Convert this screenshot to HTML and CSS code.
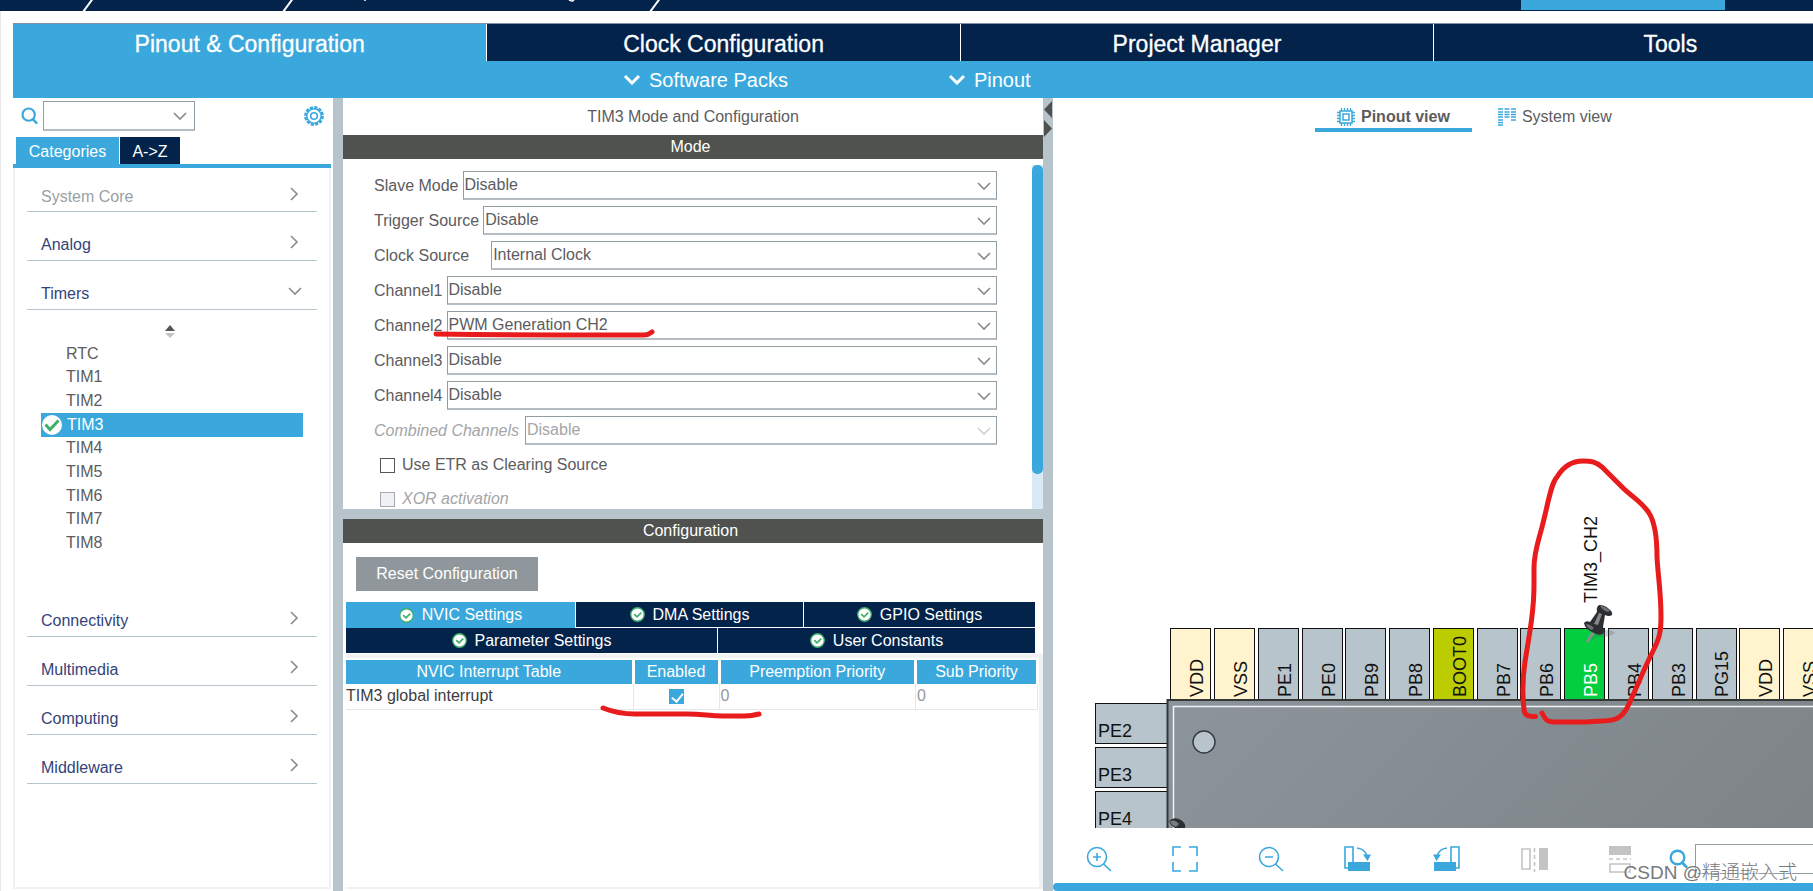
FILE: index.html
```html
<!DOCTYPE html>
<html lang="en">
<head>
<meta charset="utf-8">
<title>Pinout &amp; Configuration</title>
<link rel="stylesheet" href="styles.css">
</head>
<body>
<svg class="defs" aria-hidden="true">
  <symbol id="chev-down" viewBox="0 0 14 9"><path d="M1 1l6 6 6-6" fill="none" stroke="currentColor" stroke-width="1.6"/></symbol>
  <symbol id="chev-bold" viewBox="0 0 18 11"><path d="M2 2l7 7 7-7" fill="none" stroke="currentColor" stroke-width="3"/></symbol>
  <symbol id="chev-right" viewBox="0 0 9 14"><path d="M1 1l6 6-6 6" fill="none" stroke="currentColor" stroke-width="1.6"/></symbol>
  <symbol id="search" viewBox="0 0 20 20"><circle cx="8.500" cy="8.500" r="6.800" fill="none" stroke="currentColor" stroke-width="2.400"/><path d="M13 13.500l5 5" stroke="currentColor" stroke-width="2.600"/></symbol>
  <symbol id="ok" viewBox="0 0 16 16"><circle cx="8" cy="8" r="7.200" fill="#fff" stroke="#3fae6d" stroke-width="1.400"/><path d="M4.500 7.500l3 3 4.500-4.500" fill="none" stroke="#3fae6d" stroke-width="1.800"/></symbol>
  <symbol id="tack" viewBox="0 0 34 42">
    <path d="M8 36q6-12 16-10 6 0 8 3-6 4-12 4-6-1-12 4z" fill="#556" opacity=".25"/>
    <path d="M3 37l7-11 3 1-8 12z" fill="#8b8f93"/>
    <path d="M1 19q2-3 6-1l7-10q-1-5 2-7 6 0 10 4 4 3 3 6-3 2-7 0l-2 12q2 4 0 7-5 2-11-2-7-3-8-9z" fill="#2c2e31"/>
    <path d="M16 9l-5 11 4 1 4-11z" fill="#85898c"/><path d="M17 2q6 0 10 5l-2 1q-5-1-8-6zM3 20q4 0 8 4l-2 2q-5-2-6-6z" fill="#6c7073"/>
  </symbol>
</svg>

<header class="topbar">
  <svg class="crumbs" width="700" height="11" aria-hidden="true"><path d="M83 12l11-15M283 12l11-15M650 12l11-15" stroke="#fff" stroke-width="2"/><path d="M365 0v1M569 0q3 2 5 0" fill="none" stroke="#fff" stroke-width="1.500"/></svg>
  <span class="accent"></span>
</header>

<main class="app">
  <nav class="tabs">
    <button class="tab active">Pinout &amp; Configuration</button>
    <button class="tab">Clock Configuration</button>
    <button class="tab">Project Manager</button>
    <button class="tab">Tools</button>
  </nav>
  <div class="subbar">
    <button class="menu"><svg width="18" height="11"><use href="#chev-bold"/></svg>Software Packs</button>
    <button class="menu"><svg width="18" height="11"><use href="#chev-bold"/></svg>Pinout</button>
  </div>

  <div class="work">
    <aside class="side">
      <div class="finder">
        <svg class="blue" width="18" height="20"><use href="#search"/></svg>
        <div class="drop small"><select aria-label="Search peripherals"><option></option></select><svg width="14" height="9"><use href="#chev-down"/></svg></div>
        <button class="gear" aria-label="Settings"><svg width="22" height="22" viewBox="0 0 22 22" fill="none" stroke="#3aa8dc"><circle cx="11" cy="11" r="8.600" stroke-width="2.600" stroke-dasharray="3.200 1.300"/><circle cx="11" cy="11" r="7.200" stroke-width="1.500"/><circle cx="11" cy="11" r="3.300" stroke-width="1.600"/></svg></button>
      </div>
      <div class="sidetabs"><button class="on">Categories</button><button>A-&gt;Z</button></div>
      <div class="tree">
        <button class="cat muted">System Core<svg width="9" height="14"><use href="#chev-right"/></svg></button>
        <button class="cat">Analog<svg width="9" height="14"><use href="#chev-right"/></svg></button>
        <button class="cat">Timers<svg width="14" height="9"><use href="#chev-down"/></svg></button>
        <div class="branch">
          <svg class="sorter" width="10" height="13"><path d="M5 0l5 6H0z" fill="#555"/><path d="M0 8h10l-5 5z" fill="#c4c4c4"/></svg>
          <ul>
            <li>RTC</li><li>TIM1</li><li>TIM2</li>
            <li class="sel"><svg width="20" height="20" viewBox="0 0 20 20"><circle cx="10" cy="10" r="10" fill="#fff"/><path d="M3.500 9.500l4.500 5 8.500-9" fill="none" stroke="#3fae6d" stroke-width="3"/></svg>TIM3</li>
            <li>TIM4</li><li>TIM5</li><li>TIM6</li><li>TIM7</li><li>TIM8</li>
          </ul>
        </div>
        <button class="cat">Connectivity<svg width="9" height="14"><use href="#chev-right"/></svg></button>
        <button class="cat">Multimedia<svg width="9" height="14"><use href="#chev-right"/></svg></button>
        <button class="cat">Computing<svg width="9" height="14"><use href="#chev-right"/></svg></button>
        <button class="cat">Middleware<svg width="9" height="14"><use href="#chev-right"/></svg></button>
      </div>
    </aside>
    <div class="split"></div>

    <section class="center">
      <h1>TIM3 Mode and Configuration</h1>
      <h2>Mode</h2>
      <div class="modepane">
        <div class="form">
          <div class="row"><label for="f1">Slave Mode</label><div class="drop"><select id="f1"><option>Disable</option></select><svg width="14" height="9"><use href="#chev-down"/></svg></div></div>
          <div class="row"><label for="f2">Trigger Source</label><div class="drop"><select id="f2"><option>Disable</option></select><svg width="14" height="9"><use href="#chev-down"/></svg></div></div>
          <div class="row wide"><label for="f3">Clock Source</label><div class="drop"><select id="f3"><option>Internal Clock</option></select><svg width="14" height="9"><use href="#chev-down"/></svg></div></div>
          <div class="row"><label for="f4">Channel1</label><div class="drop"><select id="f4"><option>Disable</option></select><svg width="14" height="9"><use href="#chev-down"/></svg></div></div>
          <div class="row"><label for="f5">Channel2</label><div class="drop"><select id="f5"><option>PWM Generation CH2</option></select><svg width="14" height="9"><use href="#chev-down"/></svg></div>
            <svg class="mark channel-mark" width="224" height="12"><path d="M4 8q60 1 120 1h88q4 0 8-3" fill="none" stroke="#e81c1c" stroke-width="5" stroke-linecap="round"/></svg></div>
          <div class="row"><label for="f6">Channel3</label><div class="drop"><select id="f6"><option>Disable</option></select><svg width="14" height="9"><use href="#chev-down"/></svg></div></div>
          <div class="row"><label for="f7">Channel4</label><div class="drop"><select id="f7"><option>Disable</option></select><svg width="14" height="9"><use href="#chev-down"/></svg></div></div>
          <div class="row off"><label for="f8">Combined Channels</label><div class="drop"><select id="f8" disabled><option>Disable</option></select><svg width="14" height="9"><use href="#chev-down"/></svg></div></div>
          <div class="check"><input type="checkbox" id="c1"><label for="c1">Use ETR as Clearing Source</label></div>
          <div class="check off"><input type="checkbox" id="c2" disabled><label for="c2">XOR activation</label></div>
        </div>
        <div class="track"><div class="thumb"></div></div>
      </div>
      <div class="hsplit"></div>
      <h2>Configuration</h2>
      <div class="config">
        <button class="reset">Reset Configuration</button>
        <div class="ctabs three">
          <button class="on"><svg width="15" height="15"><use href="#ok"/></svg>NVIC Settings</button>
          <button><svg width="15" height="15"><use href="#ok"/></svg>DMA Settings</button>
          <button><svg width="15" height="15"><use href="#ok"/></svg>GPIO Settings</button>
        </div>
        <div class="ctabs two">
          <button><svg width="15" height="15"><use href="#ok"/></svg>Parameter Settings</button>
          <button><svg width="15" height="15"><use href="#ok"/></svg>User Constants</button>
        </div>
        <div class="tablepane">
          <table>
            <colgroup><col class="k1"><col class="k2"><col class="k3"><col class="k4"></colgroup>
            <thead><tr><th>NVIC Interrupt Table</th><th>Enabled</th><th>Preemption Priority</th><th>Sub Priority</th></tr></thead>
            <tbody><tr><td>TIM3 global interrupt</td><td class="mid"><input type="checkbox" class="tick" checked aria-label="TIM3 global interrupt enabled"></td><td class="num">0</td><td class="num">0</td></tr></tbody>
          </table>
          <svg class="mark table-mark" width="168" height="16"><path d="M4 4c10 4 18 6 32 6h52c16 0 22 2 36 2h22c6 0 10-1 14-2" fill="none" stroke="#e81c1c" stroke-width="5" stroke-linecap="round" stroke-linejoin="round"/></svg>
        </div>
      </div>
    </section>
    <div class="split arrows"><svg width="10" height="40"><path d="M9 3v17L1 11.500zM1 22v17l8-8.500z" fill="#505250"/></svg></div>

    <section class="right">
      <div class="views">
        <button class="view on"><svg width="18" height="18" viewBox="0 0 18 18" fill="none" stroke="#3aa8dc"><path d="M3 3h12v12H3zM6 6h6v6H6z" stroke-width="1.500"/><path d="M4.500 0v3m3-3v3m3-3v3m3-3v3M4.500 15v3m3-3v3m3-3v3m3-3v3M0 4.500h3m-3 3h3m-3 3h3m-3 3h3M15 4.500h3m-3 3h3m-3 3h3m-3 3h3" stroke-width="1.300"/></svg>Pinout view</button>
        <button class="view"><svg width="18" height="18" viewBox="0 0 18 18" stroke="#3aa8dc" stroke-width="1.500"><path d="M0 1h5m1.500 0h5M13 1h5M0 4h5m1.500 0h5M13 4h5M0 6.500h5m1.500 0h5m1.500 0h5M0 9h5m1.500 0h5m1.500 0h5M0 12h5m8 0h5M0 14.500h5M0 17h5"/></svg>System view</button>
      </div>
      <div class="canvas">
        <svg class="chip" width="100%" height="100%">
          <defs><linearGradient id="body" gradientUnits="userSpaceOnUse" x1="1250" y1="640" x2="1640" y2="1030"><stop offset="0" stop-color="#8c949b"/><stop offset="1" stop-color="#7d8386"/></linearGradient></defs>
          <g transform="translate(-1053 -140)">
            <g class="pins">
              <rect class="pw" x="1170.500" y="627.500" width="40" height="72"/><rect class="pw" x="1214.500" y="627.500" width="40" height="72"/>
              <rect x="1258.500" y="627.500" width="40" height="72"/><rect x="1302.500" y="627.500" width="40" height="72"/><rect x="1345.500" y="627.500" width="40" height="72"/><rect x="1389.500" y="627.500" width="40" height="72"/>
              <rect class="boot" x="1433.500" y="627.500" width="40" height="72"/>
              <rect x="1477.500" y="627.500" width="40" height="72"/><rect x="1520.500" y="627.500" width="40" height="72"/>
              <rect class="used" x="1564.500" y="627.500" width="40" height="72"/>
              <rect x="1608.500" y="627.500" width="40" height="72"/><rect x="1652.500" y="627.500" width="40" height="72"/><rect x="1696.500" y="627.500" width="40" height="72"/>
              <rect class="pw" x="1739.500" y="627.500" width="40" height="72"/><rect class="pw" x="1783.500" y="627.500" width="40" height="72"/>
              <rect x="1095.500" y="702.500" width="72" height="40"/><rect x="1095.500" y="746.500" width="72" height="40"/><rect x="1095.500" y="790.500" width="72" height="40"/>
            </g>
            <rect x="1167.500" y="699" width="900" height="900" fill="url(#body)" stroke="#333837" stroke-width="2"/>
            <path d="M1173.500 900V705.500H2100" fill="none" stroke="#f1f3f4" stroke-width="1.500"/>
            <circle cx="1204" cy="741" r="11" fill="#b8c4cb" stroke="#333a3c" stroke-width="1.400"/>
            <g class="names">
              <text transform="translate(1203 696) rotate(-90)">VDD</text><text transform="translate(1247 696) rotate(-90)">VSS</text><text transform="translate(1291 696) rotate(-90)">PE1</text><text transform="translate(1335 696) rotate(-90)">PE0</text><text transform="translate(1378 696) rotate(-90)">PB9</text><text transform="translate(1422 696) rotate(-90)">PB8</text><text transform="translate(1466 696) rotate(-90)">BOOT0</text><text transform="translate(1510 696) rotate(-90)">PB7</text><text transform="translate(1553 696) rotate(-90)">PB6</text><text class="lit" transform="translate(1597 696) rotate(-90)">PB5</text><text transform="translate(1641 696) rotate(-90)">PB4</text><text transform="translate(1685 696) rotate(-90)">PB3</text><text transform="translate(1728 696) rotate(-90)">PG15</text><text transform="translate(1772 696) rotate(-90)">VDD</text><text transform="translate(1816 696) rotate(-90)">VSS</text>
              <text transform="translate(1597 602) rotate(-90)">TIM3_CH2</text>
              <text x="1098" y="736">PE2</text><text x="1098" y="780">PE3</text><text x="1098" y="824">PE4</text>
            </g>
            <use href="#tack" x="1583" y="603" width="34" height="42"/>
            <path d="M1169 820q5-5 12-1 5 3 4 8h-10q-4-2-6-7z" fill="#2c2e31"/><path d="M1170 820q5-2 9 3l-3 3q-5-2-6-6z" fill="#777c80"/>
            <path class="loop" d="M1535.500 715.500c-9 0-11-2-11.500-7-2-17-1-34 1-48 5-30 9-52 9-77V567c0-17 5-28 9-45 5-19 8-40 14-46 6-10 14-16 26-16 9 0 13 1 19 6l20 20c10 10 20 15 27 26 7 11 8 27 8 44 1 20 4 34 4 60 0 16-2 22-8 34-10 20-17 38-24 53-9 20-18 16-42 18h-32c-7 0-9-1-13-9"/>
          </g>
        </svg>
      </div>
      <div class="tools">
        <button aria-label="Zoom in"><svg width="26" height="26" viewBox="0 0 26 26"><circle cx="11" cy="11" r="9.500"/><path d="M17.500 18l7.500 7M7 11h8M11 7v8"/></svg></button>
        <button aria-label="Fit"><svg width="26" height="26" viewBox="0 0 26 26"><path d="M1 10V1h8M17 1h8v9M25 16v9h-8M9 25H1v-9"/></svg></button>
        <button aria-label="Zoom out"><svg width="26" height="26" viewBox="0 0 26 26"><circle cx="11" cy="11" r="9.500"/><path d="M17.500 18l7.500 7M7 11h8"/></svg></button>
        <button aria-label="Rotate right"><svg width="28" height="26" viewBox="0 0 28 26"><path d="M4 22H1V1h8v15M13 2q8 1 10 8"/><path d="M4 16h22v9H4zM19 8.500h8L23.500 15z" fill="#3aa8dc" stroke="none"/></svg></button>
        <button aria-label="Rotate left"><svg width="28" height="26" viewBox="0 0 28 26"><path d="M24 22h3V1h-8v15M15 2Q7 3 5 10"/><path d="M2 16h22v9H2zM1 8.500h8L4.500 15z" fill="#3aa8dc" stroke="none"/></svg></button>
        <button aria-label="Mirror" disabled><svg class="dim" width="28" height="26" viewBox="0 0 28 26"><path d="M2 3h8v20H2z"/><path d="M14.500 2v24" stroke-dasharray="4 3"/><path d="M19 2h9v22h-9z" fill="#c4c4c4" stroke="none"/></svg></button>
        <button aria-label="Flip" disabled><svg class="dim" width="24" height="28" viewBox="0 0 24 28"><path d="M2 19h20v8H2z"/><path d="M1 14h22" stroke-dasharray="4 3"/><path d="M1 1h22v9H1z" fill="#c4c4c4" stroke="none"/></svg></button>
        <div class="pinsearch"><svg class="blue" width="20" height="20"><use href="#search"/></svg><input type="text" aria-label="Find pin"></div>
        <span class="watermark">CSDN @精通嵌入式</span>
      </div>
      <div class="hbar"></div>
    </section>
  </div>
</main>
</body>
</html>
```

FILE: styles.css
```css
:root {
  --sky: #3aa8dc;
  --navy: #03234b;
  --grey: #b8c4cb;
  --dark: #505250;
  --text: #5c5c5e;
}
* { box-sizing: border-box; }
body {
  margin: 0;
  height: 100vh;
  display: flex;
  flex-direction: column;
  overflow: hidden;
  background: #fff;
  color: var(--text);
  font: 16px/24px "Liberation Sans", "Noto Sans CJK SC", sans-serif;
}
button { font: inherit; color: inherit; border: 0; background: none; padding: 0; margin: 0; }
svg { display: block; flex: none; }
.defs { position: absolute; width: 0; height: 0; }
.blue { color: var(--sky); }

.topbar { height: 11px; flex: none; background: var(--navy); display: flex; justify-content: space-between; }
.accent { width: 204px; height: 10px; margin-right: 88px; background: var(--sky); }

.app { flex: 1; min-height: 0; display: flex; flex-direction: column; padding: 12px 0 0 12px; border-left: 1px solid #e6e8ea; }
.tabs { flex: none; display: grid; grid-template-columns: repeat(4, 26.3%); background: var(--navy); height: 38px; overflow: hidden; border-top: 1px solid #7f93a8; }
.tab { color: #fff; font-size: 23px; line-height: 37px; padding-top: 2px; border-left: 1px solid #fff; -webkit-text-stroke: 0.3px #fff; }
.tab.active { background: var(--sky); border-left: 0; }
.subbar { flex: none; display: flex; gap: 160px; height: 37px; padding-left: 610px; background: var(--sky); }
.menu { display: flex; align-items: center; gap: 8px; color: #fff; font-size: 20px; }

.work { flex: 1; min-height: 0; display: grid; grid-template-columns: 320px 10px minmax(0, 35fr) 10px minmax(0, 38fr); }
.split, .hsplit { background: var(--grey); }
.hsplit { height: 10px; flex: none; }

.side { display: flex; flex-direction: column; padding: 3px 2px 2px 0; min-height: 0; }
.finder { display: flex; align-items: center; gap: 4px; height: 30px; padding: 0 6px 0 8px; flex: none; }
.gear { margin-left: auto; }
.drop { position: relative; flex: 1; height: 29px; }
.drop.small { flex: none; width: 152px; height: 30px; }
.drop select {
  width: 100%; height: 100%; padding: 0 24px 0 1px; margin: 0;
  appearance: none; border: 1px solid #929ca3; border-bottom: 2px solid #b5bcc1; border-radius: 0;
  background: #fff; color: inherit; font: inherit; opacity: 1;
}
.drop svg { position: absolute; right: 6px; top: 11px; color: #8a8a8a; pointer-events: none; }
.drop.small svg { right: 8px; }
.sidetabs { flex: none; display: flex; gap: 1px; margin-top: 6px; padding-left: 3px; border-bottom: 4px solid var(--sky); }
.sidetabs button { height: 27px; padding-top: 2px; background: var(--navy); color: #fff; width: 60px; }
.sidetabs .on { background: var(--sky); width: 103px; }
.tree { flex: 1; min-height: 0; padding: 0 12px; border: 2px solid #eff1f3; border-top: 0; }
.cat {
  display: flex; justify-content: space-between; align-items: center; width: 100%; height: 49px;
  padding: 18px 18px 0 14px; border-bottom: 1px solid var(--grey); color: #33437a;
}
.cat svg { color: #8a8a8a; margin-bottom: 6px; }
.cat:nth-child(3) { padding-right: 15px; }
.cat:first-child { height: 44px; padding-top: 15px; }
.muted { color: #9a9fa5; }
.branch { height: 278px; padding: 15px 14px 0; }
.sorter { margin: 0 auto 4px 124px; }
.branch ul { list-style: none; margin: 0; padding: 0; height: 213px; display: grid; grid-auto-rows: 1fr; }
.branch li { display: flex; align-items: center; min-height: 0; line-height: 20px; padding-left: 25px; }
.branch .sel { background: var(--sky); color: #fff; padding-left: 1px; gap: 5px; }

.center { display: flex; flex-direction: column; min-height: 0; }
h1, h2 { margin: 0; flex: none; font-size: 16px; font-weight: normal; text-align: center; }
h1 { height: 37px; line-height: 37px; }
h2 { height: 24px; padding-right: 5px; background: var(--dark); color: #fff; }
.modepane { height: 350px; flex: none; display: flex; overflow: hidden; }
.form { flex: 1; padding: 12px 35px 0 31px; display: flex; flex-direction: column; gap: 6px; }
.row { position: relative; flex: none; display: flex; align-items: center; gap: 4px; }
.wide { gap: 22px; }
.off { color: #a3a5a7; gap: 6px; }
.off label { font-style: italic; }
.off .drop svg { color: #d0d0d0; }
.check { display: flex; align-items: center; gap: 7px; height: 28px; padding-left: 6px; flex: none; }
.check input { appearance: none; width: 15px; height: 15px; margin: 0; border: 1px solid #555; }
.check input:disabled { border-color: #a5abb0; background: #eff1f3; }
.track { width: 11px; margin-top: 6px; background: #d9e9f6; }
.thumb { height: 309px; border-radius: 5px; background: var(--sky); }
.mark { position: absolute; pointer-events: none; }
.channel-mark { left: 58px; top: 15px; }
.table-mark { left: 253px; top: 46px; }

.config { flex: 1; min-height: 0; display: flex; flex-direction: column; padding: 14px 0 2px 3px; background: #fff; }
.reset { align-self: flex-start; width: 182px; height: 34px; margin: 0 0 11px 10px; background: #8f979c; color: #fff; flex: none; }
.ctabs { flex: none; display: grid; gap: 1px; margin-right: 8px; height: 26px; }
.three { grid-template-columns: 229fr 227fr 231fr; }
.two { grid-template-columns: 371fr 317fr; }
.ctabs button { display: flex; align-items: center; justify-content: center; gap: 8px; height: 25px; background: var(--navy); color: #fff; }
.ctabs .on { height: 26px; background: var(--sky); }
.tablepane { position: relative; flex: 1; min-height: 0; border: 4px solid #f0f1f2; border-width: 4px 4px 2px 0; }
table { width: 100%; border-collapse: collapse; table-layout: fixed; }
.k1 { width: 287px; } .k2 { width: 86px; } .k4 { width: 122px; }
th { height: 25px; padding: 0; font-weight: normal; background: var(--sky); background-clip: padding-box; color: #fff; border: 2px solid #fff; border-width: 2px 3px 0 0; }
td { height: 25px; padding: 0; border: 1px solid #e4e8ea; border-top: 0; border-left: 0; color: #3d3d3f; }
.num { color: #96989b; padding-left: 1px; }
.tick { display: block; margin: 0 auto; width: 15px; height: 15px; appearance: none; background: var(--sky); position: relative; }
.tick::after { content: ""; position: absolute; left: 5px; top: 2px; width: 5px; height: 9px; border: solid #fff; border-width: 0 2px 2px 0; rotate: 40deg; }

.right { display: flex; flex-direction: column; min-width: 0; min-height: 0; }
.views { display: flex; flex: none; height: 43px; padding-left: 262px; gap: 2px; }
.view { display: flex; align-items: center; gap: 6px; height: 34px; padding: 7px 22px 0; border-bottom: 4px solid transparent; }
.view.on { font-weight: bold; border-color: var(--sky); }
.view + .view { padding-left: 24px; }
.canvas { flex: 1; min-height: 0; overflow: hidden; }
.pins rect { fill: #b8c4cb; stroke: #111; }
.pins .pw { fill: #fff4cd; }
.pins .boot { fill: #bbcc00; }
.pins .used { fill: #02ce3f; }
.names { font-size: 18px; fill: #111; }
.names .lit { fill: #fff; }
.loop { fill: none; stroke: #e81c1c; stroke-width: 5; stroke-linecap: round; stroke-linejoin: round; }
.tools { position: relative; flex: none; display: flex; align-items: center; gap: 60px; height: 55px; padding: 7px 0 0 33px; }
.tools button svg { fill: none; stroke: var(--sky); stroke-width: 1.6; }
.tools button svg.dim { stroke: #c4c4c4; }
.pinsearch { display: flex; align-items: center; gap: 6px; flex: 1; min-width: 0; margin-left: -23px; height: 30px; }
.pinsearch input { flex: 1; min-width: 0; height: 30px; margin: 0; border: 1px solid #929ca3; border-right: 0; }
.watermark { position: absolute; right: 16px; bottom: 0; font-size: 19px; line-height: 20px; font-weight: 300; color: #77797c; text-shadow: 1px 1px #fff; white-space: nowrap; }
.hbar { height: 8px; flex: none; background: var(--sky); border-radius: 4px 0 0 4px; }
```
